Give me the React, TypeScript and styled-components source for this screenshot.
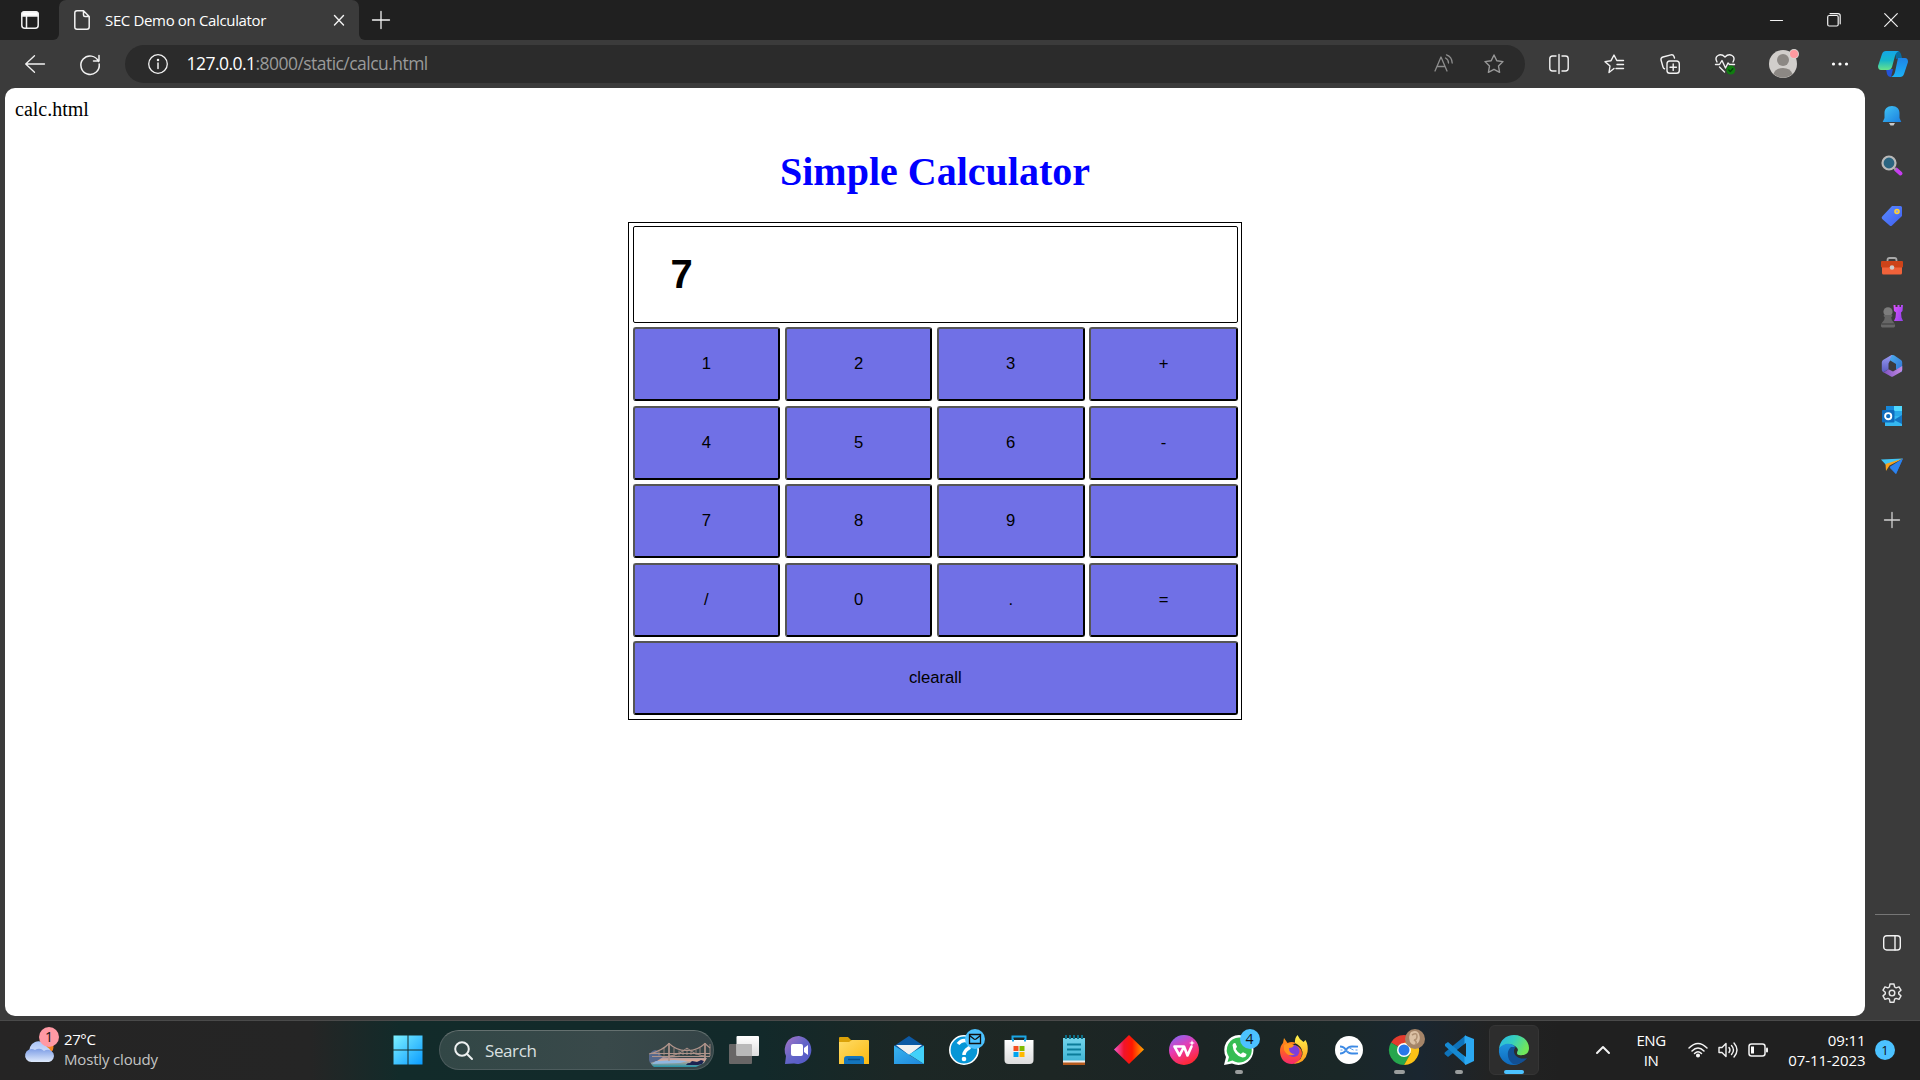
import React, { useState } from "react";
import styled, { createGlobalStyle } from "styled-components";

const UI = '"Open Sans", "Noto Sans", sans-serif';

const GlobalStyle = createGlobalStyle`
  * { box-sizing: border-box; }
  body { margin: 0; background: #3b3b3b; overflow: hidden; }
  button, input { margin: 0; }
  svg { display: block; overflow: visible; flex: none; }
`;

const Screen = styled.div`
  width: 1920px;
  height: 1080px;
  display: flex;
  flex-direction: column;
  background: #3b3b3b;
  font-family: ${UI};
  color: #fff;
`;

/* ---------- title bar ---------- */
const TitleBar = styled.header`
  height: 40px;
  display: flex;
  background: #3b3b3b;
`;
const TabActions = styled.div`
  width: 59px;
  height: 40px;
  display: flex;
  align-items: center;
  justify-content: center;
  background: #202020;
  border-bottom-right-radius: 6px;
`;
const TabBack = styled.div`
  background: #202020;
`;
const Tab = styled.div`
  width: 300px;
  height: 40px;
  display: flex;
  align-items: center;
  padding: 0 14px 0 15px;
  background: #3b3b3b;
  border-radius: 7px 7px 0 0;
`;
const TabTitle = styled.span`
  flex: 1;
  padding: 0 0 1px 15px;
  font-size: 15px;
  line-height: 20px;
  letter-spacing: -0.35px;
  white-space: nowrap;
`;
const TabRest = styled.div`
  flex: 1;
  display: flex;
  align-items: center;
  background: #202020;
  border-bottom-left-radius: 6px;
  padding-left: 13px;
`;
const WindowButtons = styled.div`
  margin-left: auto;
  display: flex;
`;
const Cell = styled.div<{ $w: number; $h?: number }>`
  width: ${(p) => p.$w}px;
  height: ${(p) => (p.$h ? p.$h + "px" : "100%")};
  flex: none;
  display: flex;
  align-items: center;
  justify-content: center;
`;

/* ---------- toolbar ---------- */
const Toolbar = styled.div`
  height: 48px;
  display: flex;
  align-items: center;
  padding-left: 7px;
`;
const AddressBar = styled.div`
  width: 1400px;
  height: 38px;
  margin: 0 6px 0 8px;
  border-radius: 19px;
  background: #2b2b2b;
  display: flex;
  align-items: center;
  padding-left: 22.5px;
`;
const Url = styled.div`
  flex: 1;
  padding: 0 0 2px 19px;
  font-size: 17.5px;
  line-height: 24px;
  letter-spacing: -0.54px;
  color: #9a9a9a;
  white-space: nowrap;
`;
const Host = styled.span`
  color: #fff;
`;

/* ---------- content ---------- */
const Body = styled.div`
  height: 932px;
  display: flex;
`;
const Page = styled.main`
  width: 1860px;
  height: 928px;
  margin-left: 5px;
  padding: 10px;
  border-radius: 10px;
  background: #fff;
  color: #000;
  font: 20px "Liberation Serif", serif;
`;
const PageNote = styled.div`
  height: 23px;
  line-height: 23px;
`;
const Heading = styled.h1`
  margin: 28px 0 27px;
  height: 46px;
  line-height: 46px;
  font-size: 40px;
  text-align: center;
  color: #0000ff;
`;
const Calculator = styled.div`
  width: 614px;
  height: 498px;
  margin: 0 auto;
  padding: 3.2px 3px 3px 3.55px;
  border: 1px solid #000;
  display: grid;
  grid-template-columns: 147.6px 147.6px 147.6px 148.9px;
  grid-template-rows: 96.5px repeat(5, 74px);
  column-gap: 4.6px;
  row-gap: 4.5px;
`;
const Display = styled.input`
  grid-column: 1 / -1;
  width: 100%;
  border: 1px solid #000;
  border-radius: 2px;
  padding: 0 37px;
  background: #fff;
  font: bold 40px "Liberation Sans", sans-serif;
  color: #000;
  outline: none;
`;
const Key = styled.button<{ $wide?: boolean }>`
  grid-column: ${(p) => (p.$wide ? "1 / -1" : "auto")};
  padding: 0 0 0.2px;
  border: 2px solid;
  border-color: #555 #000 #000 #555;
  border-radius: 3px;
  background: #7070e6;
  color: #000;
  font: 16.67px "Liberation Sans", sans-serif;
`;

/* ---------- sidebar ---------- */
const Sidebar = styled.aside`
  width: 54px;
  height: 932px;
  display: flex;
  flex-direction: column;
  align-items: center;
  padding-top: 2.6px;
`;
const Divider = styled.div`
  width: 35px;
  height: 1px;
  margin-top: auto;
  background: #767676;
`;
const SideBottom = styled.div`
  padding: 2px 0 1px;
`;

/* ---------- taskbar ---------- */
const Taskbar = styled.footer`
  height: 60px;
  display: flex;
  align-items: center;
  padding-bottom: 1px;
  border-top: 1px solid #4a4a4a;
  background: linear-gradient(
    90deg,
    #252424 0,
    #252525 310px,
    #122b2a 400px,
    #12292a 760px,
    #1c2725 900px,
    #1d2624 1050px,
    #1b2525 1200px,
    #1a2727 1340px,
    #1a2630 1420px,
    #222323 1490px,
    #202020 1560px
  );
`;
const Weather = styled.div`
  width: 380px;
  display: flex;
  padding-left: 25px;
`;
const WeatherText = styled.div`
  padding-left: 7px;
  font-size: 15px;
  line-height: 20px;
  letter-spacing: -0.4px;
  color: #fff;
  position: relative;
  top: -1px;
`;
const Muted = styled.div`
  color: #c4c4c4;
  letter-spacing: -0.17px;
`;
const SearchBox = styled.div`
  width: 275px;
  height: 40px;
  margin: 0 2px 0 5px;
  display: flex;
  align-items: center;
  padding-left: 14px;
  border: 1px solid #4d5c5d;
  border-top-color: #64706f;
  border-radius: 20px;
  background: linear-gradient(90deg, #324746, #39494a 60%, #354447);
  overflow: hidden;
`;
const SearchLabel = styled.span`
  flex: 1;
  padding-left: 12px;
  font-size: 17px;
  letter-spacing: -0.4px;
  color: #dbe0e0;
`;
const TaskCell = styled.div<{ $active?: boolean }>`
  width: 50px;
  height: 50px;
  margin: 0 2.5px;
  flex: none;
  display: flex;
  align-items: center;
  justify-content: center;
  position: relative;
  border-radius: 6px;
  border: 1px solid ${(p) => (p.$active ? "#353535" : "transparent")};
  background: ${(p) => (p.$active ? "#2d2d2d" : "transparent")};
`;
const Running = styled.i<{ $wide?: boolean; $shift?: number }>`
  position: absolute;
  bottom: 0;
  left: ${(p) => (p.$wide ? 14 : 20) - (p.$shift || 0)}px;
  width: ${(p) => (p.$wide ? 20 : p.$shift ? 11 : 8)}px;
  height: 4px;
  border-radius: 2px;
  background: ${(p) => (p.$wide ? "#4cc2ff" : "#9a9d9d")};
`;
const Badge = styled.span<{ $bg?: string }>`
  position: absolute;
  top: 3px;
  right: 3px;
  width: 20px;
  height: 20px;
  border-radius: 50%;
  background: ${(p) => p.$bg || "#4cc2ff"};
  color: #111;
  font-size: 14px;
  line-height: 20px;
  text-align: center;
`;
const WeatherIcon = styled.div`
  position: relative;
  width: 32px;
  height: 40px;
`;
const WeatherBadge = styled(Badge)`
  top: -3px;
  right: -2px;
`;
const Tray = styled.div`
  margin-left: auto;
  display: flex;
  align-items: center;
  height: 58px;
`;
const TrayText = styled.div<{ $w: number; $align: string; $track: number }>`
  width: ${(p) => p.$w}px;
  padding-bottom: 1px;
  text-align: ${(p) => p.$align};
  font-size: 15px;
  line-height: 20px;
  letter-spacing: ${(p) => p.$track}px;
  white-space: nowrap;
`;
const Notice = styled.span`
  width: 20px;
  height: 20px;
  margin: 0 25px 0 9.5px;
  border-radius: 50%;
  background: #4cc2ff;
  color: #111;
  font-size: 13px;
  line-height: 20px;
  text-align: center;
`;

type IconProps = {
  w?: number;
  h?: number;
  color?: string;
  sw?: number;
  children: React.ReactNode;
};
/* outline icon drawn on its own pixel grid */
const Line = ({ w = 20, h = w, color = "#f2f2f2", sw = 1.3, children }: IconProps) => (
  <svg width={w} height={h} viewBox={`0 0 ${w} ${h}`} fill="none" stroke={color} strokeWidth={sw} strokeLinecap="round" strokeLinejoin="round">
    {children}
  </svg>
);
const Art = ({ w = 30, h = w, children }: IconProps) => (
  <svg width={w} height={h} viewBox={`0 0 ${w} ${h}`}>{children}</svg>
);
const Grad = ({ id, from, mid, to, x2 = 1, y2 = 1 }: { id: string; from: string; mid?: string; to: string; x2?: number; y2?: number }) => (
  <linearGradient id={id} x1="0" y1="0" x2={x2} y2={y2}>
    <stop offset="0" stopColor={from} />
    {mid && <stop offset=".5" stopColor={mid} />}
    <stop offset="1" stopColor={to} />
  </linearGradient>
);

const BrowserSide = () => (
  <Sidebar>
    <Cell $w={54} $h={50}>
      <Art w={20} h={20}>
        <Grad id="bell" from="#41c5f5" to="#1b7fe0" />
        <path d="M7 17h6l-1.500 2.600h-3z" fill="#c9c9c9" />
        <path d="M10 0C5.200 0 2.500 3 2.500 7v5l-1.800 4h18.600l-1.800-4V7c0-4-2.700-7-7.500-7z" fill="url(#bell)" />
      </Art>
    </Cell>
    <Cell $w={54} $h={50}>
      <Art w={22} h={22}>
        <path d="m15 14.500 4.500 4" stroke="#c63cf0" strokeWidth="4" strokeLinecap="round" />
        <path d="m12 12 3 3" stroke="#999" strokeWidth="2" />
        <circle cx="8" cy="8" r="6.500" fill="#2b6581" stroke="#b9b9b9" strokeWidth="2.200" />
      </Art>
    </Cell>
    <Cell $w={54} $h={50}>
      <Art w={22} h={22}>
        <Grad id="tag" from="#5a8cff" to="#3f5ef0" />
        <path d="M11 1h8.500q1.500 0 1.500 1.500V11L11 20.500q-1.200 1-2.400 0L1.200 14q-1.200-1.200 0-2.400z" fill="url(#tag)" />
        <circle cx="16" cy="6.500" r="2" fill="#8da0f5" stroke="#ffd02e" strokeWidth="1.600" />
      </Art>
    </Cell>
    <Cell $w={54} $h={50}>
      <Art w={24} h={20}>
        <path d="M7.500 6V4q0-2 2-2h5q2 0 2 2v2" fill="none" stroke="#a9a9a9" strokeWidth="1.800" />
        <path d="M2 9h20v8q0 1.500-1.500 1.500h-17Q2 18.500 2 17z" fill="#f0623a" />
        <path d="M1 6q0-1 1-1h20q1 0 1 1v4.500q0 1-1 1H2q-1 0-1-1z" fill="#cd4319" />
        <circle cx="12" cy="11.500" r="2.300" fill="#ccc" />
      </Art>
    </Cell>
    <Cell $w={54} $h={50}>
      <Art w={24} h={24}>
        <Grad id="rook" from="#e050ff" to="#9a45ec" y2={0.6} />
        <path d="M13.500 1h2v2h2V1h2v2h1.500V1h2l-.5 6-1.500 1.500.5 5 1.500 3.500h-9l1.500-3.500.5-5L14 7z" fill="url(#rook)" />
        <circle cx="8" cy="7.800" r="4.600" fill="#7c7c7c" />
        <path d="M3.800 11h8.400q.8 1.500-1 2.200 0 3.500 3 5.800 1.300 2 .8 3.500l-1 1H2l-1-1q-.5-1.500.8-3.500 3-2.300 3-5.800-1.800-.7-1-2.200z" fill="#666" />
        <path d="M1.500 20h13" stroke="#3a3a3a" />
      </Art>
    </Cell>
    <Cell $w={54} $h={50}>
      <Art w={22} h={22}>
        <Grad id="m1" from="#4daff0" to="#2f71cf" />
        <Grad id="m2" from="#9a9af3" to="#5a5cc0" x2={0} />
        <Grad id="m3" from="#7a4fc0" to="#c58be4" x2={1} y2={0} />
        <path d="M12 0h-1.500L2 5Q.8 6 .8 7.500V15q0 1.500 1.500 2.300l5.200-3V8.500z" fill="url(#m2)" />
        <path d="M11 0q1-.3 2 .3L20 5q1.200.8 1.200 2.500v7.500q0 1.500-1 2.200L15 14V9L8.500 5z" fill="url(#m1)" />
        <path d="M1.500 16.800 10 21.500q1 .5 2 0l7.500-4.300q1.700-1 1.700-2.500V11L12 16.500l-4.500-2.300-3.500 2.300q-1.300.8-2.500.3z" fill="url(#m3)" />
      </Art>
    </Cell>
    <Cell $w={54} $h={50}>
      <Art w={20} h={20}>
        <path d="M4 0h16v10H4z" fill="#1687d9" />
        <path d="M12 0h8v6h-8z" fill="#50d9ff" />
        <path d="M12 5h8v5h-8z" fill="#28a8ea" />
        <path d="M3 20V10h17v10z" fill="#35b8f1" />
        <path d="m12 14 8-5v9z" fill="#1374c4" />
        <rect x="0" y="4" width="12.500" height="12.500" rx="1" fill="#0f6cbd" />
        <circle cx="6.200" cy="10.200" r="3.100" fill="none" stroke="#fff" strokeWidth="1.900" />
      </Art>
    </Cell>
    <Cell $w={54} $h={50}>
      <Art w={22} h={16}>
        <path d="M0 1.500 22 .5 6 8z" fill="#40c5f5" />
        <path d="M22 .5 15 16 9 10z" fill="#2476e8" />
        <path d="M22 .5 8.500 7.500 5 13 4.500 6z" fill="#f9a21b" />
        <path d="M22 .5 8.500 9 15 16z" fill="#2c83ef" />
      </Art>
    </Cell>
    <Cell $w={54} $h={58}>
      <Line w={16} color="#d2d2d2"><path d="M8 .5v15M.5 8h15" /></Line>
    </Cell>
    <Divider />
    <SideBottom>
      <Cell $w={54} $h={51}>
        <Line w={18} h={16} sw={1.4}><rect x=".7" y=".7" width="16.600" height="14.300" rx="3" /><path d="M12 1v14" /></Line>
      </Cell>
      <Cell $w={54} $h={51}>
        <svg width="22" height="22" viewBox="0 0 22 22" fill="none" stroke="#e8e8e8" strokeWidth="1.400" strokeLinejoin="round">
          <path d="M9 1h4l.6 3 1.500.8 2.900-1 2 3.400-2.300 2v1.700l2.300 2-2 3.500-2.900-1-1.500.8-.6 3H9l-.6-3-1.500-.8-2.900 1-2-3.500 2.300-2V9.200l-2.300-2 2-3.400 2.900 1 1.500-.8z" />
          <circle cx="11" cy="10.100" r="2.800" />
        </svg>
      </Cell>
    </SideBottom>
  </Sidebar>
);

const KEYS = ["1", "2", "3", "+", "4", "5", "6", "-", "7", "8", "9", "", "/", "0", ".", "="];

const DesktopTaskbar = () => (
  <Taskbar>
    <Weather>
      <WeatherIcon>
        <Art w={32} h={36}>
          <Grad id="cloud" from="#a9c4f8" to="#d7e3fb" x2={0} />
          <Grad id="cloud2" from="#7e9ee6" to="#dfeafc" x2={0} />
          <circle cx="21" cy="17" r="7.500" fill="#f58220" />
          <path d="M5 24a9 9 0 0 1 17-7 8 8 0 0 1 4 8z" fill="url(#cloud)" />
          <path d="M7 32a6.500 6.500 0 1 1 3-12 7 7 0 0 1 9 1 6.200 6.200 0 1 1 5 11z" fill="url(#cloud2)" />
        </Art>
        <WeatherBadge $bg="#ff99a4">1</WeatherBadge>
      </WeatherIcon>
      <WeatherText>
        27°C
        <Muted>Mostly cloudy</Muted>
      </WeatherText>
    </Weather>
    <Cell $w={55} $h={50}>
      <Art w={30}>
        <Grad id="win" from="#7df1ff" to="#0a9bff" />
        <path d="M.5.500h14v14h-14zM15.500.500h14v14h-14zM.5 15.500h14v14h-14zM15.500 15.500h14v14h-14z" fill="url(#win)" />
      </Art>
    </Cell>
    <SearchBox style={{ marginLeft: 4 }}>
      <Line w={19} sw={2} color="#eef1f1"><circle cx="8" cy="8" r="6.800" /><path d="m13 13 5 5" /></Line>
      <SearchLabel>Search</SearchLabel>
      <Art w={63} h={38}>
        <Grad id="water" from="#6f86b0" mid="#dba894" to="#1f93a8" x2={0} />
        <path d="M0 26 4 23l8 3 18 1h27l-3 5-8 4H4q-4-3-4-7z" fill="url(#water)" />
        <path d="M-1 29V24q3-5 7-5l7 7-6 4-7 2z" fill="#56688c" />
        <path d="m6 30 18-1 14 1-8 2-28 1z" fill="#8fb6de" />
        <path d="M36 34q1-2.500 4-2l2-2 5 1 4-2 3 1-2 3-4 1z" fill="#1d2450" />
        <g fill="none" stroke="#b0948b" strokeWidth="1.100">
          <path d="M-1 23Q12 20 19 12.500 27 20 37 19.500 47 20 55 12.500L60 17" />
          <path d="M0 22.500h60M2 25.500h58" />
          <path d="M19 25q9-.500 18-8 9 7.500 18 8" strokeWidth=".9" />
          <path d="M9 19.500v5M14 16.500v8M24 17v8M29 19.500v5M33 19v5M37 17v7M41 19v5M46 19v5M50 16.500v8M60 13v12" strokeWidth=".8" />
          <path d="M19 12v18M55 12v15" strokeWidth="1.700" />
        </g>
      </Art>
    </SearchBox>
    <TaskCell>
      <Art w={30} h={28}>
        <Grad id="tv" from="#fff" to="#ddd" x2={0} />
        <rect x="0" y="8" width="23" height="20" rx="1" fill="#686666" />
        <rect x="7.500" y="0" width="22.500" height="20" rx="1" fill="url(#tv)" />
        <path d="M7.500 8H22q1 0 1 1v11H8.500q-1 0-1-1z" fill="#b9b9b9" />
      </Art>
    </TaskCell>
    <TaskCell>
      <Art w={30} h={30}>
        <Grad id="chat" from="#a875c5" mid="#6365c8" to="#5057c8" />
        <path d="M15 1a14 14 0 1 1-5 27.500L1 29l1-8A14 14 0 0 1 15 1z" fill="url(#chat)" />
        <rect x="7" y="9" width="12" height="12" rx="2" fill="#fff" />
        <path d="m20 13 4-3v10l-4-3z" fill="#fff" />
      </Art>
    </TaskCell>
    <TaskCell>
      <Art w={30} h={28}>
        <Grad id="fold" from="#ffdc68" to="#fbb910" />
        <path d="M0 2q0-1 1-1h8l3 3h10v8H0z" fill="#dba108" />
        <path d="M0 6h10l3-2h16q1 0 1 1v23H0z" fill="url(#fold)" />
        <path d="M5 28v-5q0-3 3-3h14q3 0 3 3v5z" fill="#1475bd" />
        <path d="M9 23.500h12" stroke="#064f8c" strokeWidth="1.500" />
      </Art>
    </TaskCell>
    <TaskCell>
      <Art w={30} h={28}>
        <Grad id="mail" from="#39b5f0" to="#1e86dc" />
        <path d="M0 10 15 0l15 10-15 9z" fill="#0c59a4" />
        <path d="M2 9h26L15 19z" fill="#f1f1f1" />
        <path d="M0 9.500 30 28H0z" fill="url(#mail)" />
        <path d="M30 9.500 15 18.500 30 28z" fill="#42d1fa" />
      </Art>
    </TaskCell>
    <TaskCell>
      <Art w={30}>
        <circle cx="15" cy="15" r="14.200" fill="#0796d6" stroke="#fff" strokeWidth="1.600" />
        <path d="M9 9q4-5 9-3t2 7q-5 3-5 7" fill="none" stroke="#fff" strokeWidth="3.500" />
        <circle cx="15" cy="24" r="2.300" fill="#fff" />
      </Art>
      <Badge>
        <Art w={20}><path d="M4.500 5.500h11v9h-11zM4.500 6.500 9 10q1 .7 2 0l4.500-3.500" fill="none" stroke="#111" strokeWidth="1.300" /></Art>
      </Badge>
    </TaskCell>
    <TaskCell>
      <Art w={30}>
        <Grad id="store" from="#fff" to="#dcdcdc" x2={0} />
        <path d="M8.500 6V1.500h13V6" fill="none" stroke="#1ba6e5" strokeWidth="2" />
        <path d="M.5 5h29v20q0 4-4 4h-21q-4 0-4-4z" fill="url(#store)" />
        <path d="M9.500 11h5v5h-5z" fill="#f25022" /><path d="M15.500 11h5v5h-5z" fill="#7fba00" />
        <path d="M9.500 17h5v5h-5z" fill="#00a4ef" /><path d="M15.500 17h5v5h-5z" fill="#ffb900" />
        <path d="M9 4v2.500M21 4v2.500" stroke="#1ba6e5" strokeWidth="2" />
      </Art>
    </TaskCell>
    <TaskCell>
      <Art w={22} h={30}>
        <Grad id="note" from="#72d3ea" to="#41b5d5" x2={0} />
        <path d="M0 27h22v3H0z" fill="#b55a1d" />
        <path d="M0 3h22v23H0z" fill="url(#note)" /><path d="M0 25.500h22v2H0z" fill="#eee" />
        <path d="M4 9.500h14M4 14.500h14M4 19.500h14" stroke="#0b7c99" strokeWidth="2" />
        <path d="M3 0v4M7 0v4M11 0v4M15 0v4M19 0v4" stroke="#0d6e86" strokeWidth="2" />
      </Art>
    </TaskCell>
    <TaskCell>
      <Art w={30}>
        <linearGradient id="dia"><stop offset="0" stopColor="#f45ad0" /><stop offset=".33" stopColor="#f0142c" /><stop offset=".6" stopColor="#ff1800" /><stop offset="1" stopColor="#ffa600" /></linearGradient>
        <path d="m15 0 15 14.500L15 29 0 14.500z" fill="url(#dia)" />
      </Art>
    </TaskCell>
    <TaskCell>
      <Art w={30}>
        <Grad id="wps" from="#7570ff" mid="#e63bb4" to="#ff2838" x2={0.5} />
        <circle cx="15" cy="15" r="15" fill="url(#wps)" />
        <path d="M5.500 11.500H15L18.500 20.500 22.500 11.500M5.500 11.500 10.500 20.500 14 13.500" fill="none" stroke="#fff" strokeWidth="2.600" strokeLinejoin="round" strokeLinecap="round" />
        <path d="m23 5 .8 2.200 2.200.8-2.200.8L23 11l-.8-2.200L20 8l2.200-.8z" fill="#fff" />
      </Art>
    </TaskCell>
    <TaskCell>
      <Art w={30}>
        <path d="M15 0A15 15 0 1 1 8 28.500L0 30l2-8A15 15 0 0 1 15 0z" fill="#fff" />
        <path d="M15.500 2.500a12.500 12.500 0 1 1-7 23L3.500 27l1.500-5A12.500 12.500 0 0 1 15.500 2.500z" fill="#35bd54" />
        <path d="M8.500 10q1-2.500 3-1.800l1.500 3.500-1.300 2.300q1.800 3.500 5 5l2.300-1.800 3.500 1.800q0 3.500-4 3.500Q9.500 20.500 8.500 10z" fill="#fff" />
      </Art>
      <Badge>4</Badge>
      <Running />
    </TaskCell>
    <TaskCell>
      <Art w={30}>
        <Grad id="ff" from="#ff9b16" mid="#ff5d28" to="#f5286e" x2={0} />
        <Grad id="fy" from="#fff44d" to="#ff9618" x2={0} />
        <path d="M5 3 8.500 8Q13 6 17 8l-4 2q9 0 10 8c0 6-5 11-10 11C5 29 1 23 1 16q0-5 3-8z" fill="url(#ff)" />
        <path d="M16 8q-.5-5 2.500-8 1.500 4 6 7l2-2q3 5 2 12-2 11-14 12 10-5 9-12-1-6-7.500-9z" fill="url(#fy)" />
        <circle cx="14.500" cy="16" r="6" fill="#7c3edb" />
        <path d="M5 10q5-3 10 0-1 3-5 3 0 6 6 6-7 4-11-4z" fill="#ff9420" />
      </Art>
    </TaskCell>
    <TaskCell>
      <Art w={30}>
        <circle cx="15" cy="15" r="14" fill="#fff" />
        <path d="M6 11.500q4 0 6 3.500t6 3.500 6-.200M6 18.500q4 0 6-3.500t6-3.500 6 .2" fill="none" stroke="#3c8ae5" strokeWidth="1.800" />
        <path d="M6.500 15h2M21.500 15h2M15 12.500q3 2 4.500 2.500M15 17.500q-3-2-4.500-2.500" fill="none" stroke="#5c9eea" strokeWidth="1" />
      </Art>
    </TaskCell>
    <TaskCell>
      <Art w={30}>
        <path d="M15 15 2 7.500A15 15 0 0 1 28 7.500z" fill="#e33b2e" />
        <path d="M15 15 2 7.500A15 15 0 0 0 15 30l6.500-11z" fill="#26a64d" />
        <path d="M15 7.500h13A15 15 0 0 1 15 30l6.500-11.300z" fill="#fbc116" />
        <circle cx="15" cy="15" r="7" fill="#fff" /><circle cx="15" cy="15" r="5.500" fill="#2878e8" />
      </Art>
      <Badge $bg="#a48468">
        <Art w={20}>
          <path d="M6 3q6-3 8 2 2 6-1 9-5 4-8-1-2-6 1-10z" fill="#dbc0a4" />
          <path d="M7 6q5-3 5 1t-3 4q4 2 1 5" fill="none" stroke="#b09174" strokeWidth="1.500" />
        </Art>
      </Badge>
      <Running $shift={6} />
    </TaskCell>
    <TaskCell>
      <Art w={30}>
        <path d="M22 0v8L4 22l-3.500-3 .2-1.500z" fill="#0f73ba" />
        <path d="m1 9 3-2 18 15v8L1 11z" fill="#1689d2" />
        <path d="M21 .5 30 4v22l-8.500 4-1-2V2z" fill="#2ba8f1" />
        <path d="m22 8-9 7 9 7z" fill="#1d2628" />
      </Art>
      <Running />
    </TaskCell>
    <TaskCell $active>
      <Art w={30}>
        <Grad id="eg" from="#28b5eb" mid="#36cfbd" to="#71e65b" x2={1} y2={0.4} />
        <Grad id="eb" from="#1e92de" to="#0f69bc" x2={0} />
        <path d="M0 14C1 5 7 0 15 0c9 0 15 6 15 13 0 6-5 8-10 7-3-1-2-3-1-5-1-6-13-9-19-1z" fill="url(#eg)" />
        <path d="M0 14c4-7 14-6 16-2-6 0-8 7-4 12 3 4 8 4 11 3-3 2-5 3-8 3C5 30-1 22 0 14z" fill="url(#eb)" />
        <path d="M12 12c-5 4-4 13 2 17 6 1 11-2 14-6-6 2-13-1-13-7 0-2 1-3 2-4z" fill="#124f93" />
      </Art>
      <Running $wide />
    </TaskCell>
    <Tray>
      <Cell $w={44}><Line w={14} h={8} sw={2}><path d="m1 7 6-6 6 6" /></Line></Cell>
      <TrayText $w={52} $align="center" $track={-0.45}>ENG<br />IN</TrayText>
      <Cell $w={42}>
        <Line w={20} h={16} sw={1.500}>
          <path d="M1 6q9-9 18 0M4 9q6-6 12 0M6.500 11.500q3.500-3.500 7 0" />
          <circle cx="10" cy="13.500" r="1.300" fill="#fff" />
        </Line>
      </Cell>
      <Cell $w={18}>
        <Line w={20} h={16} sw={1.400}>
          <path d="M1 5.500h3l4-4v13l-4-4H1zM11 5.500q2 2.500 0 5M13.500 3.500q4 4.500 0 9M16 1q6 7 0 14" />
        </Line>
      </Cell>
      <Cell $w={42}>
        <Line w={20} h={14} sw={1.500}>
          <rect x="1" y="1" width="16" height="12" rx="2.500" />
          <rect x="3" y="3.500" width="3" height="7" fill="#fff" stroke="none" /><path d="M19 5.500v3" strokeWidth="2" />
        </Line>
      </Cell>
      <TrayText $w={86.5} $align="right" $track={-0.1}>09:11<br />07-11-2023</TrayText>
      <Notice>1</Notice>
    </Tray>
  </Taskbar>
);

export default function App() {
  const [value, setValue] = useState("7");
  return (
    <Screen>
      <GlobalStyle />
      <TitleBar>
        <TabActions>
          <Line w={18} sw={1.500}>
            <rect x=".8" y=".8" width="16.400" height="16.400" rx="3" />
            <path d="M1 3q0-2 2-2h12q2 0 2 2v2H1z" fill="#fff" /><path d="M5.500 5v12" />
          </Line>
        </TabActions>
        <TabBack>
          <Tab>
            <Line w={16} h={20} sw={1.500}>
              <path d="M3 .8h6.500l5.700 5.700V17q0 2.200-2.200 2.200H3Q.8 19.200.800 17V3Q.8.800 3 .800zM9.500 1v4q0 1.500 1.500 1.500h4" />
            </Line>
            <TabTitle>SEC Demo on Calculator</TabTitle>
            <Line w={12} h={12} sw={1.400}><path d="m1.500 1.500 9 9.500M10.500 1.500l-9 9.500" /></Line>
          </Tab>
        </TabBack>
        <TabRest>
          <Line w={18} sw={1.300}><path d="M9 .5v17M.5 9h17" /></Line>
          <WindowButtons>
            <Cell $w={57}><Line w={14} sw={1.200}><path d="M.5 7.500h12" /></Line></Cell>
            <Cell $w={57}>
              <Line w={14} sw={1.200}><rect x=".7" y="2.500" width="10.500" height="10.500" rx="1.500" /><path d="M3 .6h8q2.200 0 2.200 2.200v8" /></Line>
            </Cell>
            <Cell $w={58}><Line w={14} sw={1.200}><path d="m.7.700 12.600 12.600M13.300.700.700 13.300" /></Line></Cell>
          </WindowButtons>
        </TabRest>
      </TitleBar>
      <Toolbar>
        <Cell $w={55}><Line w={20} h={18}><path d="M19.500 9H.7M9.500.700.700 9l8.800 8.300" /></Line></Cell>
        <Cell $w={55}><Line w={20} sw={1.500}><path d="M18.500 7.500A9.200 9.200 0 1 0 19.200 10M19 1.500v5.500h-5.500" /></Line></Cell>
        <AddressBar>
          <Line w={20} sw={1.300}><circle cx="10" cy="10" r="9.300" /><path d="M10 9v5.500" strokeWidth="1.500" /><circle cx="10" cy="6" r=".6" fill="#fff" /></Line>
          <Url><Host>127.0.0.1</Host>:8000/static/calcu.html</Url>
          <Cell $w={50}>
            <Line w={20} color="#8d8d8d" sw={1.300}><path d="m1 17 6-14 6 14M3 12.500h8M11.500 4q3 1.500 3 5M12.500.800q5.500 2 5.700 8.200" /></Line>
          </Cell>
          <Cell $w={50}>
            <Line w={20} color="#989898" sw={1.400}><path d="m10 1 2.800 5.700 6.200.9-4.500 4.400 1.100 6.300L10 15.300l-5.600 3 1.100-6.300L1 7.600l6.200-.9z" /></Line>
          </Cell>
          <Cell $w={6}>{null}</Cell>
        </AddressBar>
        <Cell $w={55.500}>
          <Line w={20} sw={1.400}><path d="M7 2H3.500Q.8 2 .8 4.700v9.600Q.8 17 3.500 17H7M13 2h3.500q2.700 0 2.700 2.700v9.600q0 2.700-2.700 2.700H13M10 .500v19" /></Line>
        </Cell>
        <Cell $w={55.500}>
          <Line w={20} sw={1.400}><path d="M10 14.500 5 18.500l1-6.500L1 7.600l6-.9L10 1l2.800 5.500H19.500M13 10.500h6.500M12 14.500h7.500" /></Line>
        </Cell>
        <Cell $w={55.500}>
          <Line w={20} sw={1.400}>
            <rect x="7" y="7" width="12.300" height="12.300" rx="2.800" /><path d="M13.200 10v6.400M10 13.200h6.400M14.500 4l-.5-1.500Q13.200.400 11 .9L3 3Q.6 3.700 1 6l2 7q.4 1.500 1.500 1.800" />
          </Line>
        </Cell>
        <Cell $w={55.500}>
          <Line w={20} sw={1.400}>
            <path d="M2 8Q-.5 3.500 3 1.500t7 1.500q3.500-3.500 7-1.500T18 8M.5 10.500h4l2.500-4 3.500 7.500 2.500-5 1.500 1.500h5M4.500 13l5 5" />
            <circle cx="15.800" cy="16" r="4.500" fill="#107c10" stroke="none" /><path d="m13.800 16 1.500 1.500 2.500-2.800" stroke="#04420b" />
          </Line>
        </Cell>
        <Cell $w={59}>
          <Art w={28}>
            <circle cx="14" cy="14" r="14" fill="#d1cecb" /><circle cx="14" cy="10" r="6" fill="#8c8884" />
            <path d="M4.500 24q2-6 9.500-6t9.500 6Q14 31.500 4.500 24z" fill="#8c8884" />
            <circle cx="25" cy="4" r="5" fill="#d9d4d1" /><circle cx="25" cy="4" r="4" fill="#ff99a0" />
          </Art>
        </Cell>
        <Cell $w={56}><Art w={18} h={4}><g fill="#fff"><circle cx="2.500" cy="2" r="1.600" /><circle cx="9" cy="2" r="1.600" /><circle cx="15.500" cy="2" r="1.600" /></g></Art></Cell>
        <Cell $w={50}>
          <Art w={30} h={28}>
            <Grad id="c1" from="#13a6e8" mid="#17b6c9" to="#69e38b" x2={0} />
            <Grad id="c2" from="#1e83e6" to="#1cb2f6" x2={0} />
            <path d="M17 1h3q2 0 3 3l1 4-6 1z" fill="#086b9e" />
            <path d="M8 19h7l-2 8q-3 0-4-3z" fill="#2353d8" />
            <path d="M8 1h13q-3 1-4 5l-3 11q-1 3-4 3H3q-3 0-3-4L4 4q1-3 4-3z" fill="url(#c1)" />
            <path d="M20 8h7q3 0 3 4l-4 12q-1 3-4 3h-9q3-1 4-5z" fill="url(#c2)" />
          </Art>
        </Cell>
      </Toolbar>
      <Body>
        <Page>
          <PageNote>calc.html</PageNote>
          <Heading>Simple Calculator</Heading>
          <Calculator>
            <Display value={value} onChange={(e) => setValue(e.target.value)} />
            {KEYS.map((k, i) => (
              <Key key={i} onClick={() => setValue(value + k)}>{k}</Key>
            ))}
            <Key $wide onClick={() => setValue("")}>clearall</Key>
          </Calculator>
        </Page>
        <BrowserSide />
      </Body>
      <DesktopTaskbar />
    </Screen>
  );
}
